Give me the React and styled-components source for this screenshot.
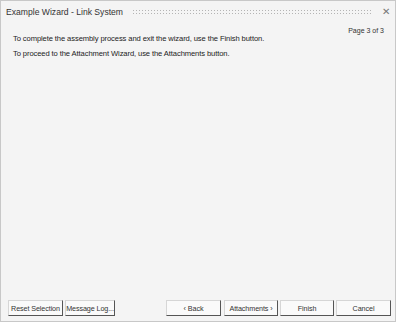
import React from 'react'
import styled, { createGlobalStyle } from 'styled-components'

const Global = createGlobalStyle`
  html, body { margin: 0; padding: 0; background: #fff; }
  body { font-family: "Liberation Sans", Arial, sans-serif; }
`

const Window = styled.div`
  width: 394px;
  height: 320px;
  background: #f4f4f4;
  border: 1px solid #c8c8c8;
  display: flex;
  flex-direction: column;
`

const TitleBar = styled.div`
  height: 22px;
  display: flex;
  align-items: center;
  padding: 0 5px 0 5px;
  gap: 9px;
`

const Title = styled.div`
  font-size: 8.6px;
  color: #333;
  white-space: nowrap;
`

const Grip = styled.div`
  flex: 1;
  height: 7px;
  background-image: radial-gradient(circle, #b4b4b4 0.7px, transparent 0.8px);
  background-size: 3px 3px;
`

const Close = styled.div`
  font-size: 10px;
  color: #777;
  line-height: 1;
`

const Body = styled.div`
  flex: 1;
  display: flex;
  flex-direction: column;
  padding: 4px 12px 0 12px;
`

const PageNo = styled.div`
  align-self: flex-end;
  font-size: 7px;
  color: #333;
  margin-right: -1px;
`

const Line = styled.p`
  margin: ${p => p.first ? '1px' : '7px'} 0 0 0;
  font-size: 7.6px;
  line-height: 8px;
  color: #222;
  letter-spacing: -0.1px;
`

const Footer = styled.div`
  display: flex;
  align-items: center;
  padding: 0 4px 5px 7px;
  gap: 2px;
`

const Spacer = styled.div`flex: 1;`

const Button = styled.button`
  width: ${p => p.w}px;
  height: 16px;
  padding: 0;
  margin-left: ${p => p.gap || 0}px;
  white-space: nowrap;
  font-family: "Liberation Sans", Arial, sans-serif;
  font-size: 7.2px;
  letter-spacing: -0.1px;
  color: #333;
  background: #fafafa;
  border: 1px solid #d6d6d6;
  border-right: 1px solid #555;
  border-bottom: 1px solid #555;
`

export default function App() {
  return (
    <>
      <Global />
      <Window>
        <TitleBar>
          <Title>Example Wizard - Link System</Title>
          <Grip />
          <Close>✕</Close>
        </TitleBar>
        <Body>
          <PageNo>Page 3 of 3</PageNo>
          <Line first>To complete the assembly process and exit the wizard, use the Finish button.</Line>
          <Line>To proceed to the Attachment Wizard, use the Attachments button.</Line>
        </Body>
        <Footer>
          <Button w={55}>Reset Selection</Button>
          <Button w={50}>Message Log...</Button>
          <Spacer />
          <Button w={55}>‹ Back</Button>
          <Button w={54} gap={1}>Attachments ›</Button>
          <Button w={54}>Finish</Button>
          <Button w={55}>Cancel</Button>
        </Footer>
      </Window>
    </>
  )
}
